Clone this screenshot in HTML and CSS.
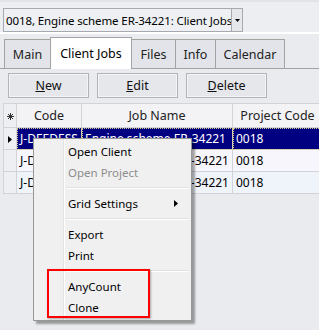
FILE: index.html
```html
<!DOCTYPE html>
<html lang="en">
<head>
    <meta charset="UTF-8">
    <title>Client Jobs</title>
    <link rel="stylesheet" href="styles.css">
</head>
<body>
    <div class="top">
        <div class="combo">
            <span class="combo-text">0018, Engine scheme ER-34221: Client Jobs</span>
            <span class="combo-btn">
                <svg width="5" height="3" viewBox="0 0 5 3"><path d="M0 0H5L2.5 3Z" fill="#000"/></svg>
            </span>
        </div>
    </div>

    <div class="tabs">
        <div class="tab tab-main">Main</div>
        <div class="tab tab-jobs active">Client Jobs</div>
        <div class="tab tab-files">Files</div>
        <div class="tab tab-info">Info</div>
        <div class="tab tab-cal">Calendar</div>
    </div>

    <div class="page">
        <div class="toolbar">
            <button class="btn"><u>N</u>ew</button>
            <button class="btn"><u>E</u>dit</button>
            <button class="btn"><u>D</u>elete</button>
        </div>

        <table class="grid">
            <colgroup>
                <col class="c-ind">
                <col class="c-code">
                <col class="c-name">
                <col class="c-proj">
            </colgroup>
            <thead>
                <tr>
                    <th class="ind">
                        <svg width="7" height="7" viewBox="0 0 7 7"><path d="M3.5 0V7M0 3.5H7M1 1L6 6M6 1L1 6" stroke="#333" stroke-width="1"/></svg>
                    </th>
                    <th>Code</th>
                    <th>Job Name</th>
                    <th>Project Code</th>
                </tr>
            </thead>
            <tbody>
                <tr class="selected">
                    <td class="ind">
                        <svg width="4" height="7" viewBox="0 0 4 7"><path d="M0 0L4 3.5L0 7Z" fill="#000"/></svg>
                    </td>
                    <td>J-DEEDESS</td>
                    <td>Engine scheme ER-34221</td>
                    <td>0018</td>
                </tr>
                <tr>
                    <td class="ind"></td>
                    <td>J-DEEDE56</td>
                    <td class="right">Engine scheme ER-34221</td>
                    <td>0018</td>
                </tr>
                <tr class="alt">
                    <td class="ind"></td>
                    <td>J-DEEDE57</td>
                    <td class="right">Engine scheme ER-34221</td>
                    <td>0018</td>
                </tr>
            </tbody>
        </table>
    </div>

    <!-- context menu over the grid -->
    <div class="menu">
        <div class="menu-item">Open Client</div>
        <div class="menu-item disabled">Open Project</div>
        <div class="menu-sep"></div>
        <div class="menu-item">Grid Settings
            <svg class="sub" width="4" height="7" viewBox="0 0 4 7"><path d="M0 0L4 3.5L0 7Z" fill="#000"/></svg>
        </div>
        <div class="menu-sep"></div>
        <div class="menu-item">Export</div>
        <div class="menu-item">Print</div>
        <div class="menu-sep"></div>
        <div class="menu-item">AnyCount</div>
        <div class="menu-item">Clone</div>
    </div>
    <div class="mark"></div>
</body>
</html>
```

FILE: styles.css
```css
body {
    margin: 0;
    width: 319px;
    height: 330px;
    overflow: hidden;
    position: relative;
    background: #eaebef;
    font-family: "Noto Sans", sans-serif;
    font-size: 12px;
    color: #000;
}
.top {
    height: 34px;
    box-sizing: border-box;
    padding: 6px 0 0 3px;
    background: #eceef1;
    border-top: 2px solid #e2e3e7;
    border-bottom: 2px solid #fff;
}
.combo {
    width: 240px;
    height: 24px;
    box-sizing: border-box;
    border: 1px solid #a6a9b0;
    background: #eef0f3;
    display: flex;
    align-items: center;
}
.combo-text {
    flex: 1;
    padding-left: 2px;
    white-space: nowrap;
    overflow: hidden;
    font-size: 11.5px;
    letter-spacing: -0.1px;
}
.combo-btn {
    width: 10px;
    height: 22px;
    border-left: 1px solid #a6a9b0;
    background: #e6e7eb;
    display: flex;
    align-items: center;
    justify-content: center;
}
.tabs {
    display: flex;
    align-items: flex-end;
    height: 31px;
    margin-top: 3px;
    padding-left: 4px;
    border-bottom: 1px solid #a3a3a3;
}
.tab {
    height: 29px;
    box-sizing: border-box;
    border: 1px solid #a3a3a3;
    border-bottom: none;
    margin-right: -1px;
    background: #e3e4e9;
    display: flex;
    align-items: center;
    justify-content: center;
    font-size: 12.5px;
    color: #222;
}
.tab.active {
    height: 32px;
    margin-bottom: -1px;
    background: #fff;
    color: #000;
    position: relative;
    z-index: 1;
}
.tab-main { width: 47px; }
.tab-jobs { width: 82px; }
.tab-files { width: 45px; }
.tab-info { width: 41px; }
.tab-cal { width: 70px; }
.page {
    padding: 4px 0 0 3px;
}
.toolbar {
    display: flex;
    gap: 8px;
    padding-left: 5px;
    margin-bottom: 5px;
}
.btn {
    width: 81px;
    height: 25px;
    padding: 0;
    border: 1px solid #b2b3b8;
    box-shadow: inset 0 0 0 1px #f3f4f6;
    background: #e6e7eb;
    font-family: "Noto Sans", sans-serif;
    font-size: 12.5px;
    color: #111;
}
.grid {
    border-collapse: collapse;
    table-layout: fixed;
    width: 319px;
}
.c-ind { width: 13px; }
.c-code { width: 65px; }
.c-name { width: 151px; }
.c-proj { width: 90px; }
.grid th,
.grid td {
    border: 1px solid #d2d3d8;
    white-space: nowrap;
    overflow: hidden;
    padding: 0 3px;
    font-size: 12px;
}
.grid th {
    height: 23px;
    font-size: 12.5px;
    background: #f3f3f5;
    font-weight: normal;
    color: #222;
}
.grid td {
    height: 21px;
    background: #f6f6fc;
}
.grid tr.alt td {
    background: #eff4fb;
}
.grid .ind {
    padding: 0;
    text-align: center;
    background: #eeeff2;
}
.grid tr.alt td.ind {
    background: #eeeff2;
}
.grid td.right {
    text-align: right;
    direction: rtl;
}
.grid tr.selected td {
    background: #000080;
    color: #fff;
    outline: 1px dotted #d6c98a;
    outline-offset: -1px;
}
.grid tr.selected td.ind {
    background: #eeeff2;
    color: #000;
    outline: none;
}
.menu {
    position: absolute;
    left: 33px;
    top: 138px;
    width: 159px;
    box-sizing: border-box;
    padding: 2px 3px 2px 2px;
    border: 1px solid #979797;
    background: #f0f0f0 linear-gradient(to right, transparent 29px, #e2e3e3 29px, #e2e3e3 30px, #fff 30px, #fff 31px, transparent 31px);
    box-shadow: 3px 3px 2px rgba(0, 0, 0, 0.35);
}
.menu-item {
    height: 21px;
    line-height: 21px;
    padding-left: 32px;
    position: relative;
    font-size: 11.5px;
}
.menu-item.disabled {
    color: #8d8d8d;
}
.menu-item .sub {
    position: absolute;
    right: 10px;
    top: 7px;
}
.menu-sep {
    height: 10px;
    margin-left: 30px;
    background: linear-gradient(to bottom, transparent 4px, #e0e0e0 4px, #e0e0e0 5px, #fff 5px, #fff 6px, transparent 6px);
}
.mark {
    position: absolute;
    left: 47px;
    top: 269px;
    width: 99px;
    height: 45px;
    border: 2px solid #f00;
    box-shadow: 1px 1px 2px rgba(0, 0, 0, 0.3);
}
```
